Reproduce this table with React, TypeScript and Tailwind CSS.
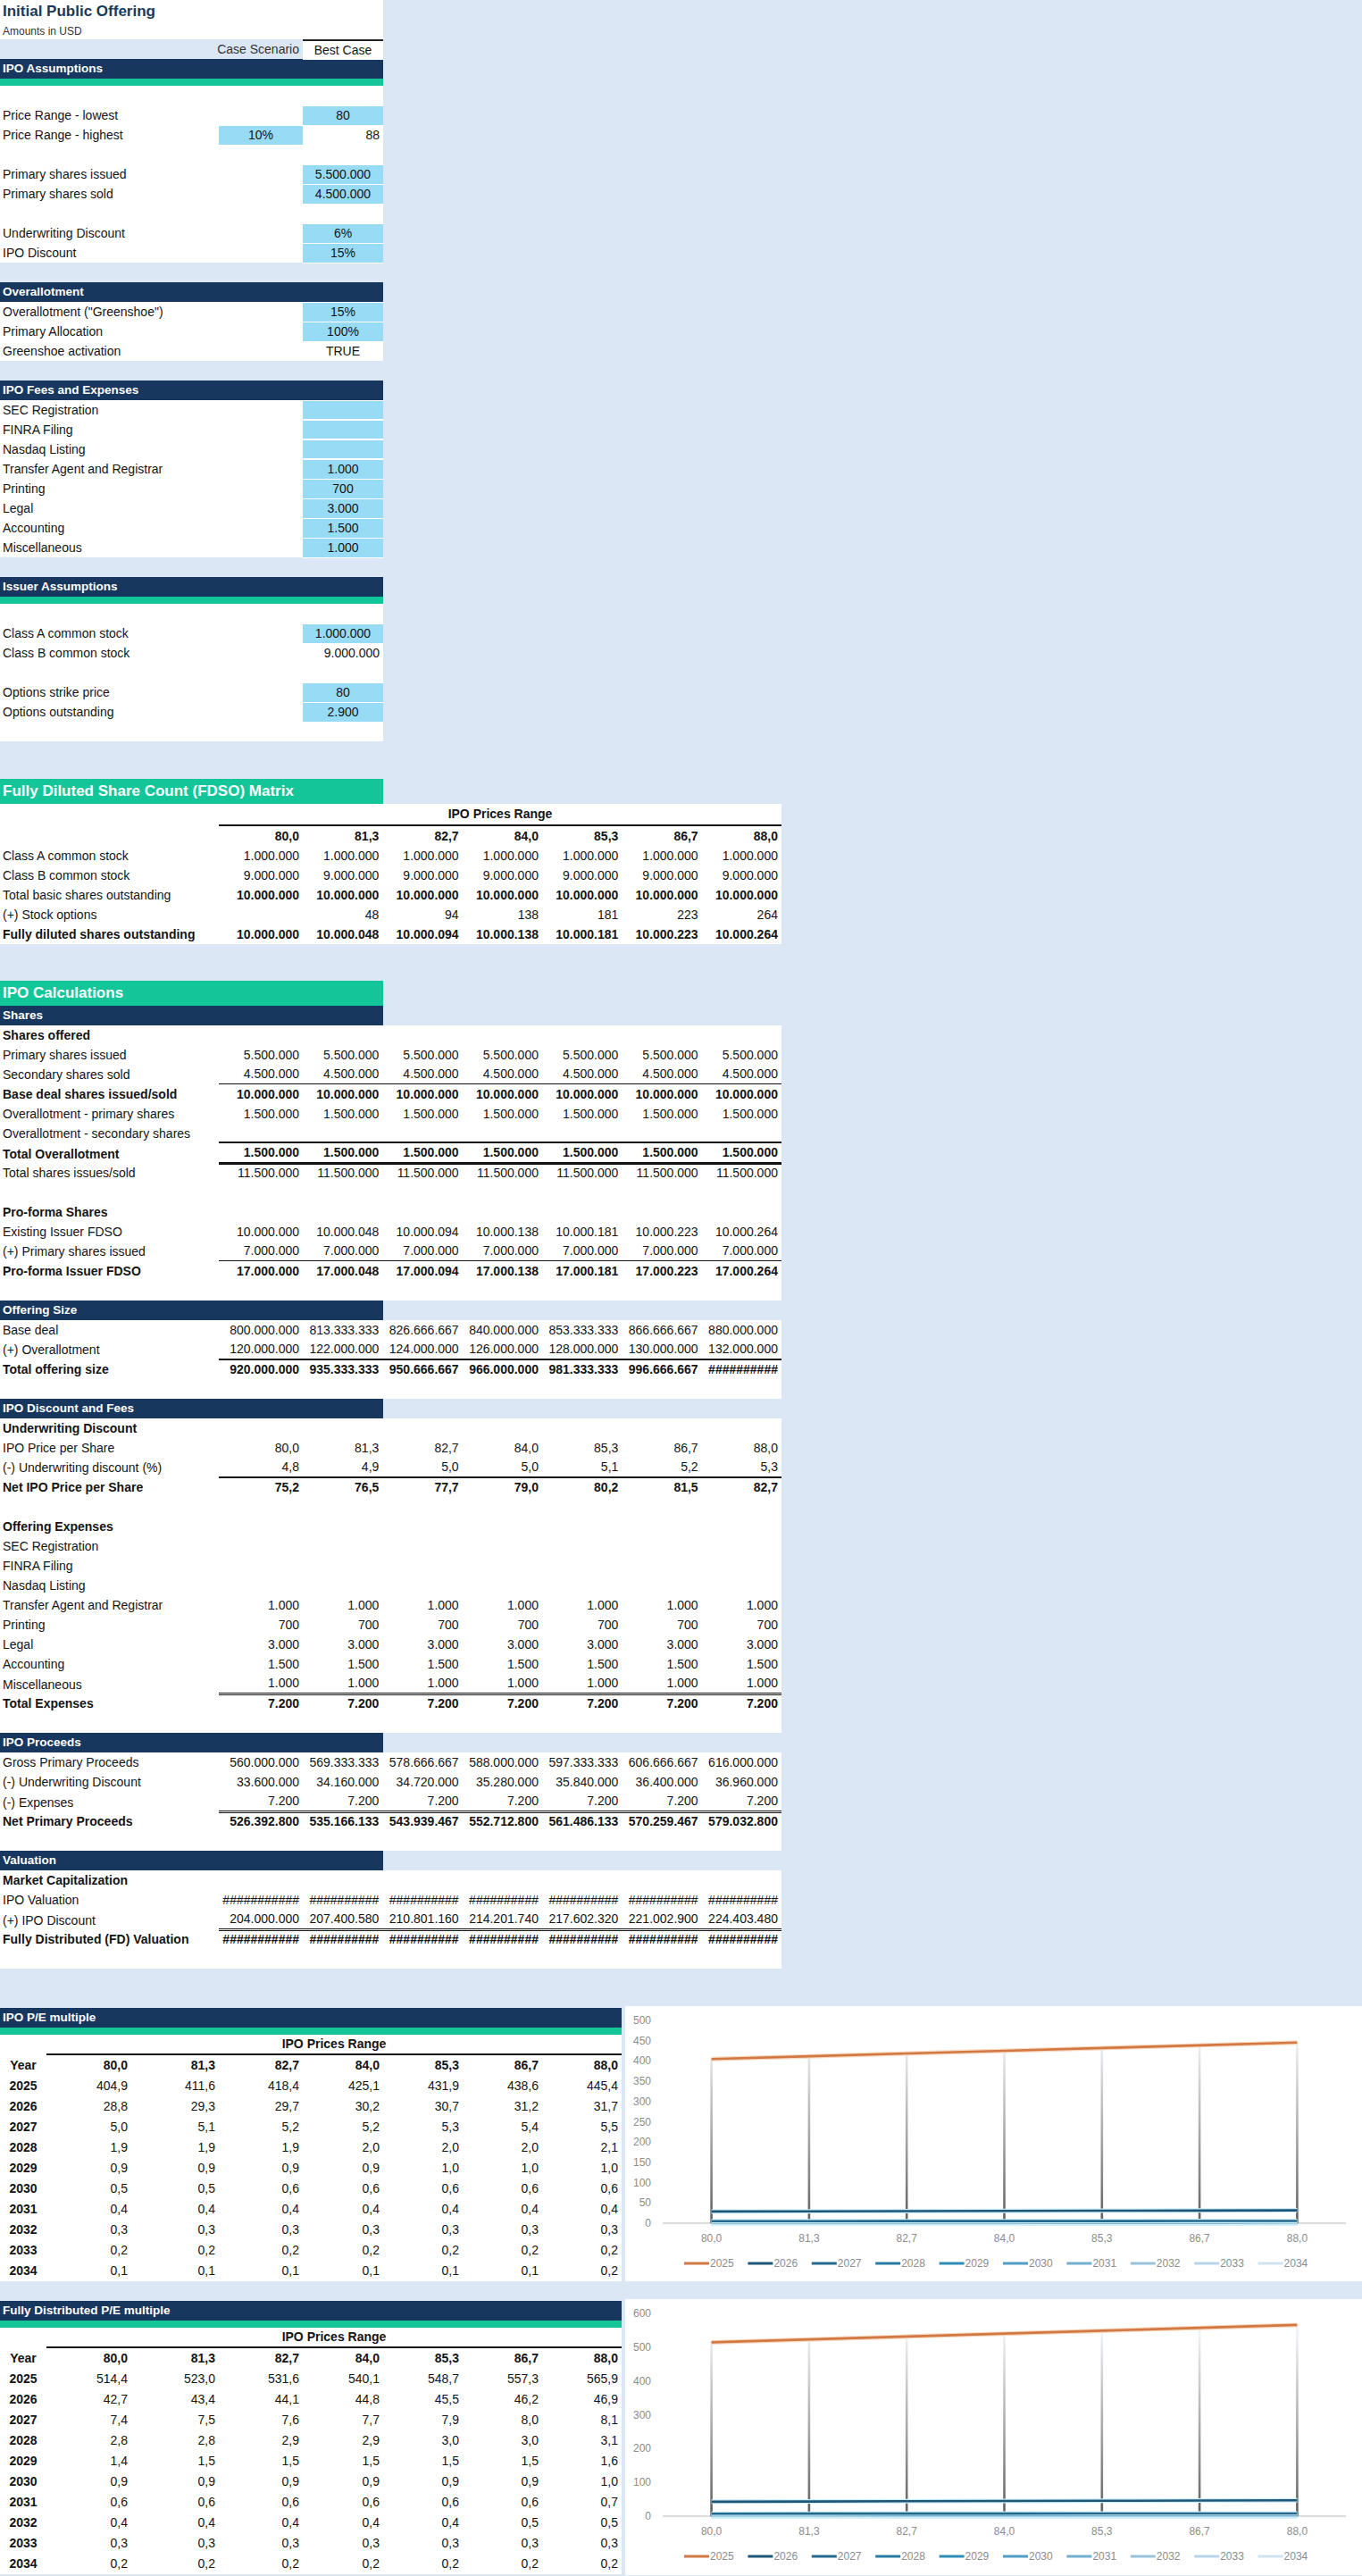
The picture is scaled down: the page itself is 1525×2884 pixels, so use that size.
// IPO model sheet: assumptions, FDSO matrix, calculations and P/E charts.

const NAVY = 'bg-[#17375e]'
const GREEN = 'bg-[#12c699]'
const INPUT = 'bg-[#97dbf5]'

const PRICES = ['80,0', '81,3', '82,7', '84,0', '85,3', '86,7', '88,0']
const rep = (v: string) => Array(7).fill(v) as string[]

// ─── Top assumptions block ──────────────────────────────────────────────────

type TopRowData = {
  label?: string
  b?: string
  c?: string
  bInput?: boolean
  cInput?: boolean
  cRight?: boolean
}

function TopRow({ label, b, c, bInput, cInput, cRight }: TopRowData) {
  return (
    <div className="grid h-[22px] w-[429px] grid-cols-[245px_94px_90px] bg-white">
      <div className="flex items-center whitespace-nowrap pl-[3px]">{label}</div>
      <div className={`flex items-center justify-center ${bInput ? `${INPUT} border-y border-white` : ''}`}>{b}</div>
      <div
        className={`flex items-center ${cRight ? 'justify-end pr-1' : 'justify-center'} ${
          cInput ? `${INPUT} border-y border-white` : ''
        }`}
      >
        {c}
      </div>
    </div>
  )
}

function SectionHeader({ title, green, h = 'h-[22px]' }: { title: string; green?: boolean; h?: string }) {
  return (
    <div className="w-[429px]">
      <div className={`${NAVY} ${h} flex items-center pl-[3px] text-[13.5px] font-bold text-white`}>{title}</div>
      {green && <div className={`${GREEN} h-[8px]`} />}
    </div>
  )
}

function GreenTitle({ title }: { title: string }) {
  return (
    <div className={`${GREEN} flex h-[28px] w-[429px] items-center pl-[3px] text-[17px] font-bold text-white`}>
      {title}
    </div>
  )
}

// ─── Matrix rows (label + 7 price columns) ──────────────────────────────────

type Border = 'thin' | 'med' | 'thick' | 'double'

const BORDER: Record<Border, string> = {
  thin: 'border-b-[1.5px] border-[#111]',
  med: 'border-b-2 border-[#111]',
  thick: 'border-b-[3px] border-[#111]',
  double: 'border-b-[3px] border-double border-[#111]',
}

type MRowData = {
  label?: string
  values?: string[]
  boldLabel?: boolean
  boldValues?: boolean
  border?: Border
}

function MRow({ label, values, boldLabel, boldValues, border }: MRowData) {
  const vals = values ?? rep('')
  return (
    <div className="grid h-[22px] w-[875px] grid-cols-[245px_94px_repeat(6,89.33px)] bg-white">
      <div className={`flex items-center whitespace-nowrap pl-[3px] ${boldLabel ? 'font-bold' : ''}`}>{label}</div>
      {vals.map((v, i) => (
        <div
          key={i}
          className={`flex items-center justify-end whitespace-nowrap pr-1 ${boldValues ? 'font-bold' : ''} ${
            border ? BORDER[border] : ''
          }`}
        >
          {v}
        </div>
      ))}
    </div>
  )
}

function MatrixBlock({ header, rows }: { header: string; rows: MRowData[] }) {
  return (
    <div>
      <SectionHeader title={header} />
      {rows.map((r, i) => (
        <MRow key={i} {...r} />
      ))}
    </div>
  )
}

// ─── P/E tables and charts ──────────────────────────────────────────────────

type PeRow = { year: string; values: string[] }

const IPO_PE: PeRow[] = [
  { year: '2025', values: ['404,9', '411,6', '418,4', '425,1', '431,9', '438,6', '445,4'] },
  { year: '2026', values: ['28,8', '29,3', '29,7', '30,2', '30,7', '31,2', '31,7'] },
  { year: '2027', values: ['5,0', '5,1', '5,2', '5,2', '5,3', '5,4', '5,5'] },
  { year: '2028', values: ['1,9', '1,9', '1,9', '2,0', '2,0', '2,0', '2,1'] },
  { year: '2029', values: ['0,9', '0,9', '0,9', '0,9', '1,0', '1,0', '1,0'] },
  { year: '2030', values: ['0,5', '0,5', '0,6', '0,6', '0,6', '0,6', '0,6'] },
  { year: '2031', values: rep('0,4') },
  { year: '2032', values: rep('0,3') },
  { year: '2033', values: rep('0,2') },
  { year: '2034', values: ['0,1', '0,1', '0,1', '0,1', '0,1', '0,1', '0,2'] },
]

const FD_PE: PeRow[] = [
  { year: '2025', values: ['514,4', '523,0', '531,6', '540,1', '548,7', '557,3', '565,9'] },
  { year: '2026', values: ['42,7', '43,4', '44,1', '44,8', '45,5', '46,2', '46,9'] },
  { year: '2027', values: ['7,4', '7,5', '7,6', '7,7', '7,9', '8,0', '8,1'] },
  { year: '2028', values: ['2,8', '2,8', '2,9', '2,9', '3,0', '3,0', '3,1'] },
  { year: '2029', values: ['1,4', '1,5', '1,5', '1,5', '1,5', '1,5', '1,6'] },
  { year: '2030', values: ['0,9', '0,9', '0,9', '0,9', '0,9', '0,9', '1,0'] },
  { year: '2031', values: ['0,6', '0,6', '0,6', '0,6', '0,6', '0,6', '0,7'] },
  { year: '2032', values: ['0,4', '0,4', '0,4', '0,4', '0,4', '0,5', '0,5'] },
  { year: '2033', values: rep('0,3') },
  { year: '2034', values: rep('0,2') },
]

const SERIES_COLORS = [
  '#d27842',
  '#1d5676',
  '#22698d',
  '#277ca2',
  '#2f8cb5',
  '#4f9cc4',
  '#74aed0',
  '#97c2dd',
  '#b7d4e8',
  '#d2e3f0',
]

const PE_GRID = 'grid grid-cols-[52px_95px_98px_94px_90px_89px_89px_89px]'

function PeTable({ title, rows }: { title: string; rows: PeRow[] }) {
  return (
    <div className="w-[696px] pt-[2px]">
      <div className={`${NAVY} flex h-[22px] items-center pl-[3px] text-[13.5px] font-bold text-white`}>{title}</div>
      <div className={`${GREEN} h-[8px]`} />
      <div className="bg-white">
        <div className={`${PE_GRID} h-[23px]`}>
          <div />
          <div className="col-span-7 flex items-center justify-center border-b-2 border-[#111] font-bold">
            IPO Prices Range
          </div>
        </div>
        <div className={`${PE_GRID} h-[23px] font-bold`}>
          <div className="flex items-center justify-center">Year</div>
          {PRICES.map((p) => (
            <div key={p} className="flex items-center justify-end pr-1">
              {p}
            </div>
          ))}
        </div>
        {rows.map((r) => (
          <div key={r.year} className={`${PE_GRID} h-[23px]`}>
            <div className="flex items-center justify-center font-bold">{r.year}</div>
            {r.values.map((v, i) => (
              <div key={i} className="flex items-center justify-end pr-1">
                {v}
              </div>
            ))}
          </div>
        ))}
      </div>
    </div>
  )
}

function PeChart({ rows, max, step, height, id }: { rows: PeRow[]; max: number; step: number; height: number; id: string }) {
  const yZero = 243
  const yTop = 16
  const sy = (v: number) => yZero - (v / max) * (yZero - yTop)
  const sx = (i: number) => 96.6 + i * 109.3
  const num = (s: string) => parseFloat(s.replace(',', '.'))
  const ticks: number[] = []
  for (let t = 0; t <= max; t += step) ticks.push(t)
  const top = rows[0].values.map(num)

  return (
    <div className="ml-[4px] w-[825px] bg-white" style={{ height }}>
      <svg width={825} height={height} className="block">
        <defs>
          <linearGradient id={`drop-${id}`} gradientUnits="userSpaceOnUse" x1="0" y1={yTop + 25} x2="0" y2={yZero}>
            <stop offset="0" stopColor="#eef1f5" />
            <stop offset="0.5" stopColor="#a9a9a9" />
            <stop offset="1" stopColor="#5e5e5e" />
          </linearGradient>
        </defs>
        {ticks.map((t) => (
          <text key={t} x={29} y={sy(t) + 4} textAnchor="end" fontSize={12} fill="#8c8c8c">
            {t}
          </text>
        ))}
        <line x1={42} x2={807} y1={yZero} y2={yZero} stroke="#dcdcdc" strokeWidth={2} />
        {top.map((v, i) => (
          <line key={i} x1={sx(i)} x2={sx(i)} y1={sy(v)} y2={yZero} stroke={`url(#drop-${id})`} strokeWidth={2.6} />
        ))}
        {rows
          .map((r, k) => ({ r, k }))
          .reverse()
          .map(({ r, k }) => {
            const pts = r.values.map((v, i) => `${sx(i)},${sy(num(v))}`).join(' ')
            return (
              <g key={r.year}>
                <polyline points={pts} fill="none" stroke={k === 0 ? '#f8d9c2' : '#cdeef8'} strokeWidth={5} />
                <polyline points={pts} fill="none" stroke={SERIES_COLORS[k]} strokeWidth={2.6} />
              </g>
            )
          })}
        {PRICES.map((p, i) => (
          <text key={p} x={sx(i)} y={264} textAnchor="middle" fontSize={12} fill="#8c8c8c">
            {p}
          </text>
        ))}
        {rows.map((r, k) => {
          const x = 66 + k * 71.4
          return (
            <g key={r.year}>
              <line x1={x} x2={x + 28} y1={288} y2={288} stroke={SERIES_COLORS[k]} strokeWidth={3} />
              <text x={x + 29} y={292} fontSize={12} fill="#8c8c8c">
                {r.year}
              </text>
            </g>
          )
        })}
      </svg>
    </div>
  )
}

// ─── Data ───────────────────────────────────────────────────────────────────

const ASSUMPTIONS: TopRowData[] = [
  {},
  { label: 'Price Range - lowest', c: '80', cInput: true },
  { label: 'Price Range - highest', b: '10%', bInput: true, c: '88', cRight: true },
  {},
  { label: 'Primary shares issued', c: '5.500.000', cInput: true },
  { label: 'Primary shares sold', c: '4.500.000', cInput: true },
  {},
  { label: 'Underwriting Discount', c: '6%', cInput: true },
  { label: 'IPO Discount', c: '15%', cInput: true },
]

const OVERALLOTMENT: TopRowData[] = [
  { label: 'Overallotment ("Greenshoe")', c: '15%', cInput: true },
  { label: 'Primary Allocation', c: '100%', cInput: true },
  { label: 'Greenshoe activation', c: 'TRUE' },
]

const FEES: TopRowData[] = [
  { label: 'SEC Registration', cInput: true },
  { label: 'FINRA Filing', cInput: true },
  { label: 'Nasdaq Listing', cInput: true },
  { label: 'Transfer Agent and Registrar', c: '1.000', cInput: true },
  { label: 'Printing', c: '700', cInput: true },
  { label: 'Legal', c: '3.000', cInput: true },
  { label: 'Accounting', c: '1.500', cInput: true },
  { label: 'Miscellaneous', c: '1.000', cInput: true },
]

const ISSUER: TopRowData[] = [
  {},
  { label: 'Class A common stock', c: '1.000.000', cInput: true },
  { label: 'Class B common stock', c: '9.000.000', cRight: true },
  {},
  { label: 'Options strike price', c: '80', cInput: true },
  { label: 'Options outstanding', c: '2.900', cInput: true },
  {},
]

const FDSO_ROWS = [
  '10.000.000',
  '10.000.048',
  '10.000.094',
  '10.000.138',
  '10.000.181',
  '10.000.223',
  '10.000.264',
]

const FDSO: MRowData[] = [
  { label: 'Class A common stock', values: rep('1.000.000') },
  { label: 'Class B common stock', values: rep('9.000.000') },
  { label: 'Total basic shares outstanding', values: rep('10.000.000'), boldValues: true },
  { label: '(+) Stock options', values: ['', '48', '94', '138', '181', '223', '264'] },
  { label: 'Fully diluted shares outstanding', values: FDSO_ROWS, boldLabel: true, boldValues: true },
]

const SHARES: MRowData[] = [
  { label: 'Shares offered', boldLabel: true },
  { label: 'Primary shares issued', values: rep('5.500.000') },
  { label: 'Secondary shares sold', values: rep('4.500.000'), border: 'thin' },
  { label: 'Base deal shares issued/sold', values: rep('10.000.000'), boldLabel: true, boldValues: true },
  { label: 'Overallotment - primary shares', values: rep('1.500.000') },
  { label: 'Overallotment - secondary shares', border: 'med' },
  { label: 'Total Overallotment', values: rep('1.500.000'), boldLabel: true, boldValues: true, border: 'thick' },
  { label: 'Total shares issues/sold', values: rep('11.500.000') },
  {},
  { label: 'Pro-forma Shares', boldLabel: true },
  { label: 'Existing Issuer FDSO', values: FDSO_ROWS },
  { label: '(+) Primary shares issued', values: rep('7.000.000'), border: 'thin' },
  {
    label: 'Pro-forma Issuer FDSO',
    values: ['17.000.000', '17.000.048', '17.000.094', '17.000.138', '17.000.181', '17.000.223', '17.000.264'],
    boldLabel: true,
    boldValues: true,
  },
  {},
]

const OFFERING: MRowData[] = [
  {
    label: 'Base deal',
    values: ['800.000.000', '813.333.333', '826.666.667', '840.000.000', '853.333.333', '866.666.667', '880.000.000'],
  },
  {
    label: '(+) Overallotment',
    values: ['120.000.000', '122.000.000', '124.000.000', '126.000.000', '128.000.000', '130.000.000', '132.000.000'],
    border: 'med',
  },
  {
    label: 'Total offering size',
    values: ['920.000.000', '935.333.333', '950.666.667', '966.000.000', '981.333.333', '996.666.667', '##########'],
    boldLabel: true,
    boldValues: true,
  },
  {},
]

const DISCOUNT: MRowData[] = [
  { label: 'Underwriting Discount', boldLabel: true },
  { label: 'IPO Price per Share', values: PRICES },
  { label: '(-) Underwriting discount (%)', values: ['4,8', '4,9', '5,0', '5,0', '5,1', '5,2', '5,3'], border: 'med' },
  {
    label: 'Net IPO Price per Share',
    values: ['75,2', '76,5', '77,7', '79,0', '80,2', '81,5', '82,7'],
    boldLabel: true,
    boldValues: true,
  },
  {},
  { label: 'Offering Expenses', boldLabel: true },
  { label: 'SEC Registration' },
  { label: 'FINRA Filing' },
  { label: 'Nasdaq Listing' },
  { label: 'Transfer Agent and Registrar', values: rep('1.000') },
  { label: 'Printing', values: rep('700') },
  { label: 'Legal', values: rep('3.000') },
  { label: 'Accounting', values: rep('1.500') },
  { label: 'Miscellaneous', values: rep('1.000'), border: 'double' },
  { label: 'Total Expenses', values: rep('7.200'), boldLabel: true, boldValues: true },
  {},
]

const PROCEEDS: MRowData[] = [
  {
    label: 'Gross Primary Proceeds',
    values: ['560.000.000', '569.333.333', '578.666.667', '588.000.000', '597.333.333', '606.666.667', '616.000.000'],
  },
  {
    label: '(-) Underwriting Discount',
    values: ['33.600.000', '34.160.000', '34.720.000', '35.280.000', '35.840.000', '36.400.000', '36.960.000'],
  },
  { label: '(-) Expenses', values: rep('7.200'), border: 'double' },
  {
    label: 'Net Primary Proceeds',
    values: ['526.392.800', '535.166.133', '543.939.467', '552.712.800', '561.486.133', '570.259.467', '579.032.800'],
    boldLabel: true,
    boldValues: true,
  },
  {},
]

const HASHES = ['###########', ...Array(6).fill('##########')] as string[]

const VALUATION: MRowData[] = [
  { label: 'Market Capitalization', boldLabel: true },
  { label: 'IPO Valuation', values: HASHES },
  {
    label: '(+) IPO Discount',
    values: ['204.000.000', '207.400.580', '210.801.160', '214.201.740', '217.602.320', '221.002.900', '224.403.480'],
    border: 'double',
  },
  { label: 'Fully Distributed (FD) Valuation', values: HASHES, boldLabel: true, boldValues: true },
  {},
]

// ─── Page ───────────────────────────────────────────────────────────────────

export default function App() {
  return (
    <div className="min-h-[2884px] w-[1525px] bg-[#dce7f5] font-['Liberation_Sans',Arial,sans-serif] text-[14px] text-[#141414]">
      {/* Title + assumptions */}
      <div className="w-[429px] bg-white">
        <div className="flex h-[26px] items-center pl-[3px] text-[17px] font-bold text-[#183a5a]">
          Initial Public Offering
        </div>
        <div className="flex h-[18px] items-center pl-[3px] text-[12px] text-[#333]">Amounts in USD</div>
      </div>
      <div className="grid h-[22px] w-[429px] grid-cols-[245px_94px_90px]">
        <div />
        <div className="flex items-center justify-end whitespace-nowrap pr-1 text-[#333]">Case Scenario</div>
        <div className="flex items-center justify-center border-t-2 border-[#222] bg-white">Best Case</div>
      </div>
      <SectionHeader title="IPO Assumptions" green />
      {ASSUMPTIONS.map((r, i) => (
        <TopRow key={i} {...r} />
      ))}
      <div className="h-[22px]" />
      <SectionHeader title="Overallotment" />
      {OVERALLOTMENT.map((r, i) => (
        <TopRow key={i} {...r} />
      ))}
      <div className="h-[22px]" />
      <SectionHeader title="IPO Fees and Expenses" />
      {FEES.map((r, i) => (
        <TopRow key={i} {...r} />
      ))}
      <div className="h-[22px]" />
      <SectionHeader title="Issuer Assumptions" green />
      {ISSUER.map((r, i) => (
        <TopRow key={i} {...r} />
      ))}

      {/* FDSO matrix */}
      <div className="h-[42px]" />
      <GreenTitle title="Fully Diluted Share Count (FDSO) Matrix" />
      <div className="w-[875px] bg-white">
        <div className="grid h-[25px] grid-cols-[245px_630px]">
          <div />
          <div className="flex items-center justify-center border-b-2 border-[#111] font-bold">IPO Prices Range</div>
        </div>
        <MRow values={PRICES} boldValues />
        {FDSO.map((r, i) => (
          <MRow key={i} {...r} />
        ))}
      </div>

      {/* IPO calculations */}
      <div className="h-[41px]" />
      <GreenTitle title="IPO Calculations" />
      <MatrixBlock header="Shares" rows={SHARES} />
      <MatrixBlock header="Offering Size" rows={OFFERING} />
      <MatrixBlock header="IPO Discount and Fees" rows={DISCOUNT} />
      <MatrixBlock header="IPO Proceeds" rows={PROCEEDS} />
      <MatrixBlock header="Valuation" rows={VALUATION} />

      {/* P/E multiples */}
      <div className="h-[42px]" />
      <div className="flex items-start">
        <PeTable title="IPO P/E multiple" rows={IPO_PE} />
        <PeChart rows={IPO_PE} max={500} step={50} height={308} id="ipo" />
      </div>
      <div className="h-[20px]" />
      <div className="flex items-start">
        <PeTable title="Fully Distributed P/E multiple" rows={FD_PE} />
        <PeChart rows={FD_PE} max={600} step={100} height={309} id="fd" />
      </div>
    </div>
  )
}
